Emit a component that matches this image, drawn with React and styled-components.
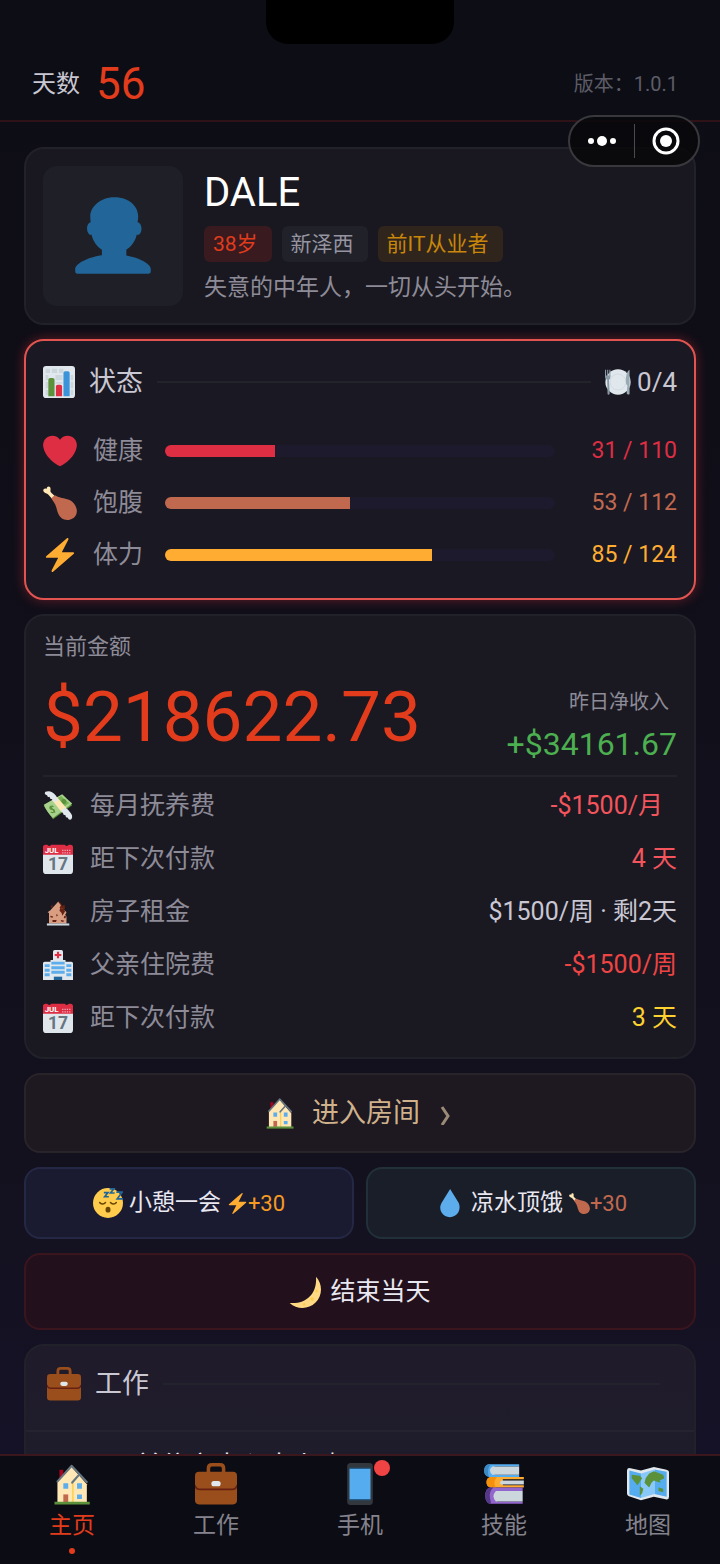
import React, { useState } from 'react';
import styled, { createGlobalStyle } from 'styled-components';

const colors = {
  accent: '#e23c1c',
  text: '#c9c7d2',
  muted: '#8d8b97',
  dim: '#5d5c67',
  health: '#dd2e44',
  food: '#c1694f',
  energy: '#ffac33',
  green: '#4caf50',
  danger: '#f4545c',
  red: '#ee4444',
  yellow: '#fdd130',
};

const GlobalStyle = createGlobalStyle`
  * {
    box-sizing: border-box;
  }
  body {
    margin: 0;
    background: #0d0d15;
    color: ${colors.text};
    font-family: Roboto, "Noto Sans CJK SC", sans-serif;
    line-height: 1.5;
  }
  button {
    font-family: inherit;
    line-height: inherit;
    cursor: pointer;
  }
  h1, h2, p, dl, dd {
    margin: 0;
    font-weight: 400;
  }
`;

const Screen = styled.div`
  height: 100vh;
  display: flex;
  flex-direction: column;
  position: relative;
  background: linear-gradient(180deg, #0d0d15 0%, #0f0e17 25%, #14111f 75%, #15122a 100%);
`;

const Notch = styled.div`
  position: absolute;
  top: 0;
  left: 50%;
  width: 188px;
  height: 44px;
  margin-left: -94px;
  background: #000;
  border-radius: 0 0 22px 22px;
`;

const Header = styled.header`
  display: flex;
  align-items: center;
  justify-content: space-between;
  padding: 58px 42px 10px 32px;
  background: #0d0e15;
  border-bottom: 2px solid #2e1218;
`;

const DayCount = styled.div`
  display: flex;
  align-items: center;
  gap: 16px;
  font-size: 24px;
  line-height: 52px;
`;

const DayNumber = styled.strong`
  color: ${colors.accent};
  font-size: 44px;
  font-weight: 400;
`;

const Version = styled.span`
  color: ${colors.dim};
  font-size: 20px;
`;

const Capsule = styled.div`
  position: absolute;
  top: 115px;
  right: 20px;
  display: flex;
  align-items: center;
  width: 132px;
  height: 52px;
  border: 2px solid #38383d;
  border-radius: 26px;
  background: rgba(8, 8, 11, 0.85);
`;

const CapsuleButton = styled.button`
  flex: 1;
  display: flex;
  justify-content: center;
  align-items: center;
  height: 34px;
  padding: 0;
  border: 0;
  background: none;

  & + & {
    border-left: 1px solid #4a4a4f;
  }
`;

const Main = styled.main`
  flex: 1;
  min-height: 0;
  overflow-y: auto;
  scrollbar-width: none;
  display: flex;
  flex-direction: column;
  gap: 14px;
  padding: 25px 24px 0;

  & > * {
    flex-shrink: 0;
  }
`;

const Card = styled.section`
  padding: 17px;
  border: 2px solid ${p => (p.$alert ? '#e2544f' : '#21212a')};
  border-radius: 20px;
  background: ${p => (p.$alert ? '#1a1822' : '#1a1922')};
  box-shadow: ${p => (p.$alert ? '0 0 12px rgba(226, 50, 60, 0.4)' : 'none')};
`;

const Profile = styled(Card)`
  display: flex;
  align-items: center;
  gap: 21px;
  background: #191820;
`;

const Avatar = styled.div`
  width: 140px;
  height: 140px;
  display: flex;
  align-items: center;
  justify-content: center;
  border-radius: 14px;
  background: #1f1f27;
`;

const ProfileText = styled.div`
  padding-top: 3px;
`;

const Name = styled.h1`
  color: #fff;
  font-size: 40px;
  line-height: 48px;
`;

const Tags = styled.div`
  display: flex;
  flex-wrap: wrap;
  gap: 10px;
  margin: 9px 0 8px;
`;

const tagTones = {
  hot: { fg: colors.accent, bg: '#381a1f' },
  plain: { fg: '#9694a0', bg: '#21212a' },
  gold: { fg: '#c8860a', bg: '#30251c' },
};

const Tag = styled.span`
  padding: 0 14px 0 9px;
  border-radius: 6px;
  font-size: 21px;
  line-height: 36px;
  color: ${p => tagTones[p.$tone].fg};
  background: ${p => tagTones[p.$tone].bg};
`;

const Bio = styled.p`
  color: ${colors.muted};
  font-size: 23px;
  line-height: 36px;
`;

const TitleRow = styled.div`
  display: flex;
  align-items: center;
  gap: 14px;
  height: 48px;
`;

const Title = styled.h2`
  font-size: 27px;
`;

const Rule = styled.span`
  flex: 1;
  height: 2px;
  background: #23232c;
`;

const Meals = styled.span`
  display: flex;
  align-items: center;
  gap: 6px;
  font-size: 26px;
`;

const Stats = styled.div`
  padding-top: 19px;
`;

const StatRow = styled.div`
  display: grid;
  grid-template-columns: 34px 56px 1fr 106px;
  align-items: center;
  column-gap: 16px;
  height: 52px;
`;

const StatName = styled.span`
  color: ${colors.muted};
  font-size: 25px;
`;

const Track = styled.div`
  height: 12px;
  border-radius: 6px;
  background: #1e1a2d;
  overflow: hidden;
`;

const Fill = styled.div`
  height: 100%;
  background: ${p => p.$color};
`;

const StatValue = styled.span`
  color: ${p => p.$color};
  font-size: 23px;
  text-align: right;
  white-space: nowrap;
`;

const MoneyCard = styled(Card)`
  padding-bottom: 2px;
`;

const Balance = styled.div`
  display: flex;
  align-items: flex-end;
  justify-content: space-between;
  padding: 10px 0 12px;
  border-bottom: 2px solid #22222b;
`;

const Caption = styled.p`
  color: ${colors.muted};
  font-size: ${p => (p.$small ? '20px' : '22px')};
  line-height: 28px;
`;

const Amount = styled.strong`
  color: ${colors.accent};
  font-size: 71px;
  font-weight: 400;
  line-height: 92px;
`;

const Income = styled.div`
  display: flex;
  flex-direction: column;
  align-items: flex-end;
  gap: 9px;
`;

const IncomeLabel = styled(Caption)`
  padding-right: 8px;
`;

const IncomeValue = styled.span`
  color: ${colors.green};
  font-size: 32px;
  line-height: 38px;
`;

const Bills = styled.dl`
  display: flex;
  flex-direction: column;
  gap: 15px;
  padding: 10px 0 18px;
`;

const Bill = styled.div`
  display: flex;
  align-items: center;
  font-size: 25px;
  line-height: 38px;
`;

const BillName = styled.dt`
  margin-left: 17px;
  color: ${colors.muted};
`;

const BillValue = styled.dd`
  margin-left: auto;
  padding-right: ${p => (p.$inset ? '14px' : '0')};
  color: ${p => p.$color};
`;

const Action = styled.button`
  display: flex;
  flex: 1;
  align-items: center;
  justify-content: center;
  gap: 6px;
  min-height: 72px;
  border: 2px solid ${p => p.$border};
  border-radius: 16px;
  background: ${p => p.$bg};
  color: #e9e7f0;
  font-size: 23px;
`;

const WideAction = styled(Action)`
  flex: 0 0 auto;
  min-height: ${p => (p.$tall ? '80px' : '77px')};
  gap: ${p => (p.$tall ? '16px' : '9px')};
  font-size: ${p => (p.$tall ? '27px' : '25px')};
  color: ${p => (p.$tall ? '#cfb28c' : '#e9e7f0')};
`;

const ActionRow = styled.div`
  display: flex;
  gap: 12px;
`;

const Bonus = styled.span`
  display: flex;
  align-items: center;
  font-size: 22px;
  color: ${p => p.$color};
`;

const JobCard = styled(Card)`
  padding: 0;
  background: linear-gradient(180deg, #201b2b, #1e1c2b 60%, #1d1d35);
`;

const JobTitle = styled(TitleRow)`
  height: 86px;
  padding: 6px 34px 14px 21px;
  border-bottom: 2px solid #25232f;
`;

const JobName = styled.p`
  padding: 14px 110px 60px;
  color: #e9e7f0;
  font-size: 26px;
  line-height: 40px;
`;

const Nav = styled.nav`
  display: grid;
  grid-template-columns: repeat(5, 1fr);
  height: 110px;
  background: #0c0d14;
  border-top: 2px solid #3a171d;
`;

const NavItem = styled.a`
  position: relative;
  display: flex;
  flex-direction: column;
  align-items: center;
  padding-top: 7px;
  color: ${p => (p.$active ? colors.accent : '#85838e')};
  font-size: 23px;
  line-height: 42px;
  text-decoration: none;

  &::after {
    content: '';
    width: 6px;
    height: 6px;
    margin-top: 1px;
    border-radius: 50%;
    background: ${p => (p.$active ? colors.accent : 'transparent')};
  }
`;

const Badge = styled.span`
  position: absolute;
  top: 4px;
  left: 50%;
  width: 16px;
  height: 16px;
  margin-left: 14px;
  border-radius: 50%;
  background: #f04343;
`;

const IconSvg = styled.svg`
  flex: none;
  display: block;
`;

// All icons are drawn on a 36 unit grid
const Icon = ({ name, size }) => (
  <IconSvg width={size} height={size} viewBox="0 0 36 36" aria-hidden="true">
    {icons[name]}
  </IconSvg>
);

const icons = {
  person: (
    <path fill="#269" d="M24 26.799v-2.566c2-1.348 4.08-3.779 4.703-6.896.186.103.206.17.413.17.991 0 1.709-1.287 1.709-2.873 0-1.562-.823-2.827-1.794-2.865.187-.674.293-1.577.293-2.735C29.324 5.168 26 .527 18.541.527c-6.629 0-10.777 4.641-10.777 8.507 0 1.123.069 2.043.188 2.755-.911.137-1.629 1.352-1.629 2.845 0 1.587.804 2.873 1.796 2.873.206 0 .025-.067.209-.17C8.952 20.453 11 22.885 13 24.232v2.414c-5 .645-12 3.437-12 6.230v1.061C1 35 2.076 35 3.137 35h29.725C33.924 35 35 35 35 33.938v-1.061c0-2.615-6-5.225-11-6.078z" />
  ),
  chart: (
    <>
      <rect width="36" height="36" rx="3.5" fill="#E1E8ED" />
      <path fill="#CCD6DD" d="M3 3h5v5H3zM10 3h6v5h-6zM18 3h5v5h-5zM3 10h3v6H3zM14 10h8v6h-8zM3 18h3v7H3zM14 18h8v2h-8zM3 27h3v6H3zM31 10h3v6h-3zM31 18h3v7h-3zM31 27h3v6h-3z" />
      <path fill="#5C913B" d="M6 15.5a2 2 0 0 1 2-2h3a2 2 0 0 1 2 2V34H6z" />
      <path fill="#DD2E44" d="M14.5 23a2 2 0 0 1 2-2h3a2 2 0 0 1 2 2v11h-7z" />
      <path fill="#3B94D9" d="M23 8a2 2 0 0 1 2-2h3a2 2 0 0 1 2 2v26h-7z" />
    </>
  ),
  plate: (
    <>
      <circle cx="18" cy="18" r="17.5" fill="#E1E8ED" />
      <circle cx="18" cy="18" r="11" fill="none" stroke="#CCD6DD" strokeWidth="1" />
      <path fill="#8899A6" d="M0 1h1.5v8H3V1h1.5v8H6V1h1.5v10q0 3-2 4l1 19.500q-2 2-3 0L3 15q-3-1-3-4z" />
      <path fill="#99AAB5" d="M34 1v34q-3 1-4-1l1-11q-3-3-2-11 1-9 5-11z" />
    </>
  ),
  heart: (
    <path fill="#DD2E44" d="M35.885 11.833c0-5.45-4.418-9.868-9.867-9.868-3.308 0-6.227 1.633-8.018 4.129-1.791-2.496-4.71-4.129-8.017-4.129-5.45 0-9.868 4.417-9.868 9.868 0 .772.098 1.52.266 2.241C1.751 22.587 11.216 31.568 18 34.034c6.783-2.466 16.249-11.447 17.617-19.959.17-.721.268-1.469.268-2.242z" />
  ),
  drumstick: (
    <>
      <path fill="#FFE8B6" d="M.8 6C-.8 4 1.500 1.500 4 3 4-.5 8 0 8 3c0 2-.5 2.500.5 3.800L13 11l-3 3-4.500-5C4 7.500 2.300 7.800.8 6z" />
      <path fill="#C1694F" d="M9 13.500c.5-2 2.500-3.500 4.500-3.500 4 3 9 2.500 14 4.500 6 2.500 9.500 9.500 8 14.500-1.500 5.500-7.500 8-13 6.500-6-2-7-8-8.500-13-1-4-3-6-5-9z" />
    </>
  ),
  bolt: (
    <path fill="#FFAC33" d="M32.938 15.651C32.792 15.26 32.418 15 32 15H19.925L26.89 1.458c.219-.426.106-.947-.271-1.243C26.437.071 26.218 0 26 0c-.233 0-.466.082-.653.243L18 6.588 3.347 19.243c-.316.273-.43.714-.284 1.105S3.582 21 4 21h12.075L9.11 34.542c-.219.426-.106.947.271 1.243.182.144.401.215.619.215.233 0 .466-.082.653-.243L18 29.412l14.653-12.655c.317-.273.43-.714.285-1.106z" />
  ),
  money: (
    <>
      <path fill="#5C913B" d="M1 18l23-13 11 12-23 17z" />
      <path fill="#A7D28B" d="M1 16.500L23 4q6 6 12 11L12 32.500Q5 26 1 16.500z" />
      <path fill="#77B255" d="M22 6q4 5 9.500 8.500l-7 5-9-10z" />
      <circle cx="25" cy="12.500" r="3" fill="#5C913B" />
      <path fill="#FFE8B6" d="M11 11l6-3.500 11 13-6 4.500z" />
      <path fill="none" stroke="#5C913B" strokeWidth="1.500" d="M12.500 19c-2-2-5 0-4 2s4 0 5 2-2 4-4 2M8.500 18l6 8" />
      <path fill="#E1E8ED" d="M3 1c4-2 9 0 11 3 2 2 3 4 4 7l-4 2c-2 0-3-1-3-3-2 0-3-1-3-3-2 1-3-1-3-2C3 5 1 3 3 1z" />
      <path fill="#E1E8ED" d="M22 23l4-3c3 1 5 3 6 5 3 3 4 6 2 9-2 1-4 0-4-2-2 0-3-1-3-3-2 0-3-1-3-3-2 0-2-1-2-3z" />
    </>
  ),
  calendar: (
    <>
      <path fill="#E0E7EC" d="M0 10h36v22a4 4 0 0 1-4 4H4a4 4 0 0 1-4-4z" />
      <path fill="#DD2E44" d="M0 13V4a3 3 0 0 1 3-3h2a3 3 0 0 0 5 0h16a3 3 0 0 0 5 0h2a3 3 0 0 1 3 3v9z" />
      <text x="2" y="11" fontSize="9.5" fontWeight="700" fill="#fff">JUL</text>
      <path stroke="#F4ABBA" strokeWidth="1.5" strokeDasharray="1.5 1.3" d="M23 7.500h11M23 10.500h11" />
      <text x="18" y="31.5" fontSize="21" fontWeight="700" fill="#66757F" textAnchor="middle">17</text>
    </>
  ),
  ruin: (
    <g transform="translate(3 4) scale(.84)">
      <path fill="#662113" d="M7 9l3-3v5zM18 1l4 3 2 4 3-2 1 6-12 4z" />
      <path fill="#D99E82" d="M5 33V18l-2-1 4-3 11-12 4 5-2 4 5 1 5 5-2 4 2 2v10z" />
      <path fill="#662113" d="M21 11l5 1 2 4-4 6-1-4-3-3zM7 22l4 1-1 2-3-1zM15 20l3 1-2 2zM27 22l3 1-2 3-2-1zM10 28h6l-1 3h-5zM22 28l5 1-2 2-3-1z" />
      <path fill="#CCD6DD" d="M2 33h32v3H2z" />
    </g>
  ),
  hospital: (
    <>
      <path fill="#E1E8ED" d="M12 2a2 2 0 0 1 2-2h8a2 2 0 0 1 2 2v10h3v2h7a2 2 0 0 1 2 2v20H0V16a2 2 0 0 1 2-2h7v-2h3z" />
      <path fill="#DD2E44" d="M16.700 2h2.600v2.700H22v2.600h-2.700V10h-2.600V7.300H14V4.700h2.700z" />
      <path fill="#5DADEC" d="M10 14h16v3.500H10zM10 19.500h16V23H10zM10 25h16v3.500H10zM2 17h6v3.500H2zM2 22.500h6V26H2zM2 28h6v3.500H2zM28 17h6v3.500h-6zM28 22.500h6V26h-6zM28 28h6v3.500h-6z" />
      <path fill="#226699" d="M13 32h10v4H13z" />
    </>
  ),
  house: (
    <g transform="translate(3 1) scale(.84 .96)">
      <path fill="#A0041E" d="M5 5h4v9H5z" />
      <path fill="#FFE8B6" d="M3 34V16L17 2l8 8 8 8v16z" />
      <path fill="#FFCC4D" d="M18 17h1.500v17H18z" />
      <path fill="none" stroke="#66757F" strokeWidth="2" strokeLinejoin="round" strokeLinecap="round" d="M3 15.500L17.500 1.500 33 16M18 16.500l7.500-7.500" />
      <path fill="#5DADEC" d="M9 17h5v5H9zM23 17h5v5h-5zM23 27h5v4h-5z" />
      <path fill="#C1694F" d="M9 27h5v7H9z" />
      <path fill="#5C913B" d="M0 33.500h36v2.500H0z" />
    </g>
  ),
  sleepy: (
    <>
      <circle cx="18" cy="18" r="18" fill="#FFCC4D" />
      <path fill="none" stroke="#664500" strokeWidth="1.800" strokeLinecap="round" d="M8 17.500q4 3.500 7 0M21 17.500q4 3.500 7 0" />
      <ellipse cx="18" cy="26" rx="3" ry="3.500" fill="#664500" />
      <path fill="none" stroke="#226699" strokeWidth="2" d="M13 5.500h5l-4 5h5M20 1h5l-4 5h5M28 5h7l-6 8h7" />
    </>
  ),
  drop: (
    <path fill="#5DADEC" d="M28.344 17.768L18.148 1.090 8 17.654c-2.200 3.510-2.392 8.074-.081 11.854 3.285 5.373 10.363 7.098 15.811 3.857 5.446-3.240 7.199-10.226 4.614-15.597z" />
  ),
  moon: (
    <>
      <path fill="#FFD983" d="M30.312.776C32 19 20 32 .776 30.312c8.199 7.717 21.091 7.588 29.107-.429C37.9 21.867 38.03 8.975 30.312.776z" />
      <circle cx="31" cy="17" r="1.500" fill="#FFCC4D" />
      <circle cx="26" cy="26" r="2" fill="#FFCC4D" />
      <circle cx="17" cy="32" r="1.500" fill="#FFCC4D" />
    </>
  ),
  briefcase: (
    <>
      <path fill="none" stroke="#9A4E1C" strokeWidth="3" d="M11.500 9V4.500q0-3 3-3h7q3 0 3 3V9" />
      <rect y="7.500" width="36" height="28" rx="3.500" fill="#9A4E1C" />
      <path fill="none" stroke="#662113" strokeWidth="1.500" d="M0 19q.5 3.500 4 3.500h28q3.500 0 4-3.500" />
      <rect x="14" y="15.500" width="8" height="4.500" rx="2.200" fill="#E1E8ED" />
    </>
  ),
  phone: (
    <>
      <rect x="7" y="0" width="22" height="36" rx="3" fill="#31373D" />
      <path fill="#55ACEE" d="M9 5h18v26H9z" />
      <path fill="#226699" d="M9 4h18v1H9zM9 31h18v1H9z" />
    </>
  ),
  books: (
    <>
      <path fill="#55ACEE" d="M5 1h26v2H10v7h21v2H5q-4-1-4-5.500T5 1z" />
      <path fill="#3B88C3" d="M4.500 1h3q-4 2-3 9l1 2H5q-4-1-4-5.500T4.500 1z" />
      <path fill="#CCD6DD" d="M8 3h23v7H8q-4-3.500 0-7z" />
      <path fill="#FFAC33" d="M7 12h28v2H17v5h18v2H7q-4-.5-4-4.500T7 12z" />
      <path fill="#F4900C" d="M7 12h5q-4 4-1 9H7q-4-.5-4-4.500T7 12z" />
      <path fill="#CCD6DD" d="M16 15h19v3.500H16q-3-1.500 0-3.500z" />
      <path fill="#9266CC" d="M6 21h28v3H12v9h22v2H6q-4-1-4-7t4-7z" />
      <path fill="#553788" d="M6 21h3q-4 3-3 9l1 5H6q-4-1-4-7t4-7z" />
      <path fill="#CCD6DD" d="M11 24h23v9H11q-4-4.500 0-9z" />
    </>
  ),
  map: (
    <>
      <path fill="#E1E8ED" d="M0 6.500q0-3 3-2l9 2 11-3 10 2q3 .5 3 2.500v21q0 3-3 2l-10-2-11 3-9-3q-3-.5-3-3z" />
      <path fill="#55ACEE" d="M2 6.500l10 2.500v21l-10-3zM23.500 5.500L34 7.500V29l-10.500-2.500z" />
      <path fill="#88C9F9" d="M12 9l11.500-3.500v21L12 30z" />
      <path fill="#5C913B" d="M4 10l7 1 2 2-2 3-2 3-5-6zM11 20l3 2-1 4-2 2zM16 13l3-4 4-2 8 3 1 3-4 2 1 2-3-1-3-1-2 2-2 4-2-2-2-2zM27 21l4 1v3l-4-1z" />
    </>
  ),
};

const stats = [
  { icon: 'heart', name: '健康', value: 31, max: 110, color: colors.health },
  { icon: 'drumstick', name: '饱腹', value: 53, max: 112, color: colors.food },
  { icon: 'bolt', name: '体力', value: 85, max: 124, color: colors.energy },
];

const bills = [
  { icon: 'money', name: '每月抚养费', value: '-$1500/月', color: colors.danger, inset: true },
  { icon: 'calendar', name: '距下次付款', value: '4 天', color: colors.danger },
  { icon: 'ruin', name: '房子租金', value: '$1500/周 · 剩2天', color: colors.text },
  { icon: 'hospital', name: '父亲住院费', value: '-$1500/周', color: colors.red },
  { icon: 'calendar', name: '距下次付款', value: '3 天', color: colors.yellow },
];

const tabs = [
  { id: 'home', icon: 'house', name: '主页' },
  { id: 'work', icon: 'briefcase', name: '工作' },
  { id: 'phone', icon: 'phone', name: '手机', badge: true },
  { id: 'skills', icon: 'books', name: '技能' },
  { id: 'map', icon: 'map', name: '地图' },
];

export default function App() {
  const [tab, setTab] = useState('home');

  return (
    <Screen>
      <GlobalStyle />
      <Header>
        <DayCount>
          天数 <DayNumber>56</DayNumber>
        </DayCount>
        <Version>版本：1.0.1</Version>
      </Header>
      <Notch />

      <Main>
        <Profile>
          <Avatar>
            <Icon name="person" size={80} />
          </Avatar>
          <ProfileText>
            <Name>DALE</Name>
            <Tags>
              <Tag $tone="hot">38岁</Tag>
              <Tag $tone="plain">新泽西</Tag>
              <Tag $tone="gold">前IT从业者</Tag>
            </Tags>
            <Bio>失意的中年人，一切从头开始。</Bio>
          </ProfileText>
        </Profile>

        <Card $alert>
          <TitleRow>
            <Icon name="chart" size={32} />
            <Title>状态</Title>
            <Rule />
            <Meals>
              <Icon name="plate" size={26} />
              0/4
            </Meals>
          </TitleRow>
          <Stats>
            {stats.map(s => (
              <StatRow key={s.name}>
                <Icon name={s.icon} size={34} />
                <StatName>{s.name}</StatName>
                <Track>
                  <Fill $color={s.color} style={{ width: `${(s.value / s.max) * 100}%` }} />
                </Track>
                <StatValue $color={s.color}>{s.value} / {s.max}</StatValue>
              </StatRow>
            ))}
          </Stats>
        </Card>

        <MoneyCard>
          <Caption>当前金额</Caption>
          <Balance>
            <Amount>$218622.73</Amount>
            <Income>
              <IncomeLabel $small>昨日净收入</IncomeLabel>
              <IncomeValue>+$34161.67</IncomeValue>
            </Income>
          </Balance>
          <Bills>
            {bills.map((b, i) => (
              <Bill key={i}>
                <Icon name={b.icon} size={30} />
                <BillName>{b.name}</BillName>
                <BillValue $color={b.color} $inset={b.inset}>{b.value}</BillValue>
              </Bill>
            ))}
          </Bills>
        </MoneyCard>

        <WideAction $tall $border="#29232a" $bg="#1e1820">
          <Icon name="house" size={32} />
          进入房间
          <svg width="20" height="24" viewBox="0 0 20 24" aria-hidden="true">
            <path d="M6 6l6 9-6 9" fill="none" stroke="#9c8a78" strokeWidth="3" />
          </svg>
        </WideAction>

        <ActionRow>
          <Action $border="#252844" $bg="#1a1b31">
            <Icon name="sleepy" size={30} />
            小憩一会
            <Bonus $color="#f59a23">
              <Icon name="bolt" size={21} />
              +30
            </Bonus>
          </Action>
          <Action $border="#22303a" $bg="#1a1e29">
            <Icon name="drop" size={30} />
            凉水顶饿
            <Bonus $color={colors.food}>
              <Icon name="drumstick" size={21} />
              +30
            </Bonus>
          </Action>
        </ActionRow>

        <WideAction $border="#3b151e" $bg="#22111c">
          <Icon name="moon" size={32} />
          结束当天
        </WideAction>

        <JobCard>
          <JobTitle>
            <Icon name="briefcase" size={34} />
            <Title>工作</Title>
            <Rule />
          </JobTitle>
          <JobName>前往市中心去上班</JobName>
        </JobCard>
      </Main>

      <Nav>
        {tabs.map(t => (
          <NavItem key={t.id} href={`#${t.id}`} $active={t.id === tab} onClick={() => setTab(t.id)}>
            <Icon name={t.icon} size={42} />
            {t.badge && <Badge />}
            {t.name}
          </NavItem>
        ))}
      </Nav>

      <Capsule>
        <CapsuleButton aria-label="更多">
          <svg width="30" height="14" viewBox="0 0 30 14">
            <g fill="#fff">
              <circle cx="4" cy="7" r="3" />
              <circle cx="15" cy="7" r="5" />
              <circle cx="26" cy="7" r="3" />
            </g>
          </svg>
        </CapsuleButton>
        <CapsuleButton aria-label="关闭">
          <svg width="30" height="30" viewBox="0 0 30 30">
            <circle cx="15" cy="15" r="12" fill="none" stroke="#fff" strokeWidth="3" />
            <circle cx="15" cy="15" r="6" fill="#fff" />
          </svg>
        </CapsuleButton>
      </Capsule>
    </Screen>
  );
}
